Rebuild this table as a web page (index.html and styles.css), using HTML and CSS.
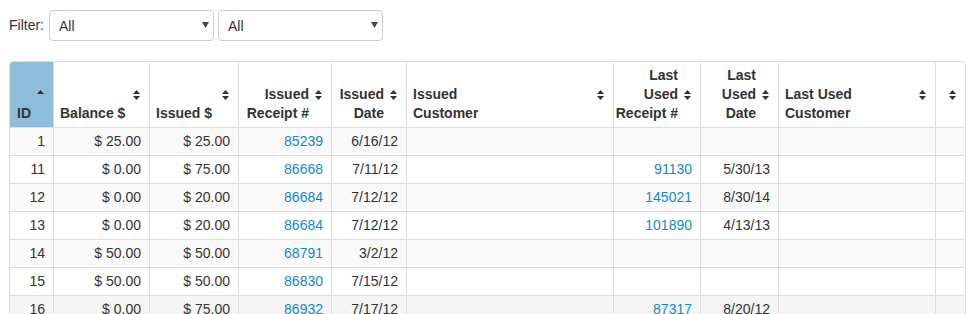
FILE: index.html
```html
<!DOCTYPE html>
<html>
<head>
<meta charset="utf-8">
<link rel="stylesheet" href="styles.css">
</head>
<body>
<div class="page">
  <div class="filter">
    <span class="filter-label">Filter:</span>
    <div class="select"><span>All</span><svg class="caret" width="7" height="6" viewBox="0 0 7 6"><polygon points="0,0 7,0 3.5,6" fill="#444"/></svg></div>
    <div class="select"><span>All</span><svg class="caret" width="7" height="6" viewBox="0 0 7 6"><polygon points="0,0 7,0 3.5,6" fill="#444"/></svg></div>
  </div>
  <table class="grid">
    <thead>
      <tr>
        <th class="c-id sorted">ID<svg class="sort" width="7" height="10" viewBox="0 0 7 10"><polygon points="0,4 3.5,0 7,4" fill="#333"/></svg></th>
        <th class="c-bal">Balance $<svg class="sort" width="7" height="10" viewBox="0 0 7 10"><polygon points="0,4 3.5,0 7,4" fill="#333"/><polygon points="0,6 3.5,10 7,6" fill="#333"/></svg></th>
        <th class="c-iss">Issued $<svg class="sort" width="7" height="10" viewBox="0 0 7 10"><polygon points="0,4 3.5,0 7,4" fill="#333"/><polygon points="0,6 3.5,10 7,6" fill="#333"/></svg></th>
        <th class="c-rec r">Issued<br>Receipt #<svg class="sort" width="7" height="10" viewBox="0 0 7 10"><polygon points="0,4 3.5,0 7,4" fill="#333"/><polygon points="0,6 3.5,10 7,6" fill="#333"/></svg></th>
        <th class="c-date r">Issued<br>Date<svg class="sort" width="7" height="10" viewBox="0 0 7 10"><polygon points="0,4 3.5,0 7,4" fill="#333"/><polygon points="0,6 3.5,10 7,6" fill="#333"/></svg></th>
        <th class="c-cust">Issued<br>Customer<svg class="sort" width="7" height="10" viewBox="0 0 7 10"><polygon points="0,4 3.5,0 7,4" fill="#333"/><polygon points="0,6 3.5,10 7,6" fill="#333"/></svg></th>
        <th class="c-lrec r tight">Last<br>Used<br>Receipt #<svg class="sort" width="7" height="10" viewBox="0 0 7 10"><polygon points="0,4 3.5,0 7,4" fill="#333"/><polygon points="0,6 3.5,10 7,6" fill="#333"/></svg></th>
        <th class="c-ldate r">Last<br>Used<br>Date<svg class="sort" width="7" height="10" viewBox="0 0 7 10"><polygon points="0,4 3.5,0 7,4" fill="#333"/><polygon points="0,6 3.5,10 7,6" fill="#333"/></svg></th>
        <th class="c-lcust">Last Used<br>Customer<svg class="sort" width="7" height="10" viewBox="0 0 7 10"><polygon points="0,4 3.5,0 7,4" fill="#333"/><polygon points="0,6 3.5,10 7,6" fill="#333"/></svg></th>
        <th class="c-x"><svg class="sort" width="7" height="10" viewBox="0 0 7 10"><polygon points="0,4 3.5,0 7,4" fill="#333"/><polygon points="0,6 3.5,10 7,6" fill="#333"/></svg></th>
      </tr>
    </thead>
    <tbody>
      <tr><td>1</td><td>$ 25.00</td><td>$ 25.00</td><td><a href="#">85239</a></td><td>6/16/12</td><td class="l"></td><td></td><td></td><td class="l"></td><td></td></tr>
      <tr><td>11</td><td>$ 0.00</td><td>$ 75.00</td><td><a href="#">86668</a></td><td>7/11/12</td><td class="l"></td><td><a href="#">91130</a></td><td>5/30/13</td><td class="l"></td><td></td></tr>
      <tr><td>12</td><td>$ 0.00</td><td>$ 20.00</td><td><a href="#">86684</a></td><td>7/12/12</td><td class="l"></td><td><a href="#">145021</a></td><td>8/30/14</td><td class="l"></td><td></td></tr>
      <tr><td>13</td><td>$ 0.00</td><td>$ 20.00</td><td><a href="#">86684</a></td><td>7/12/12</td><td class="l"></td><td><a href="#">101890</a></td><td>4/13/13</td><td class="l"></td><td></td></tr>
      <tr><td>14</td><td>$ 50.00</td><td>$ 50.00</td><td><a href="#">68791</a></td><td>3/2/12</td><td class="l"></td><td></td><td></td><td class="l"></td><td></td></tr>
      <tr><td>15</td><td>$ 50.00</td><td>$ 50.00</td><td><a href="#">86830</a></td><td>7/15/12</td><td class="l"></td><td></td><td></td><td class="l"></td><td></td></tr>
      <tr class="hover"><td>16</td><td>$ 0.00</td><td>$ 75.00</td><td><a href="#">86932</a></td><td>7/17/12</td><td class="l"></td><td><a href="#">87317</a></td><td>8/20/12</td><td class="l"></td><td></td></tr>
    </tbody>
  </table>
</div>
</body>
</html>
```
FILE: styles.css
```css
html, body {
  margin: 0;
  padding: 0;
  overflow: hidden;
  background: #fff;
}
body {
  font-family: "Liberation Sans", Arial, sans-serif;
  font-size: 14px;
  color: #333;
}
.page {
  padding: 10px 0 0 9px;
}
.filter {
  display: flex;
  align-items: center;
  height: 31px;
}
.filter-label {
  margin-right: 5px;
  line-height: 20px;
  position: relative;
  top: -1px;
}
.select {
  box-sizing: border-box;
  width: 165px;
  height: 31px;
  border: 1px solid #ccc;
  border-radius: 4px;
  display: flex;
  align-items: center;
  justify-content: space-between;
  padding: 1px 4px 0 9px;
  margin-right: 4px;
  background: #fff;
}
.caret {
  display: block;
  margin-top: -2px;
}
.grid {
  margin-top: 20px;
  width: 957px;
  table-layout: fixed;
  border-collapse: separate;
  border-spacing: 0;
  border: 1px solid #ddd;
  border-radius: 4px;
}
.grid th {
  position: relative;
  box-sizing: border-box;
  font-weight: bold;
  text-align: left;
  vertical-align: bottom;
  line-height: 19px;
  padding: 4px 22px 4px 6px;
  border-left: 1px solid #ddd;
  white-space: nowrap;
}
.grid th.r {
  text-align: right;
}
.grid th.tight {
  padding-left: 1px;
}
.grid th:first-child {
  border-left: none;
  border-top-left-radius: 3px;
  padding-left: 7px;
}
.grid th.sorted {
  background: #8dbdd8;
}
.sort {
  position: absolute;
  right: 9px;
  top: 50%;
  margin-top: -5px;
  display: block;
}
.c-id { width: 43px; }
.c-bal { width: 96px; }
.c-iss { width: 89px; }
.c-rec { width: 93px; }
.c-date { width: 75px; }
.c-cust { width: 207px; }
.c-lrec { width: 87px; }
.c-ldate { width: 78px; }
.c-lcust { width: 157px; }
.c-x { width: 30px; }
.grid td {
  border-top: 1px solid #ddd;
  border-left: 1px solid #ddd;
  padding: 4px 8px;
  line-height: 19px;
  text-align: right;
  white-space: nowrap;
}
.grid td:first-child {
  border-left: none;
}
.grid td.l {
  text-align: left;
}
.grid tbody tr:nth-child(odd) td {
  background: #f9f9f9;
}
.grid tbody tr.hover td {
  background: #f5f5f5;
}
.grid a {
  color: #1289cf;
  text-decoration: none;
}
```
